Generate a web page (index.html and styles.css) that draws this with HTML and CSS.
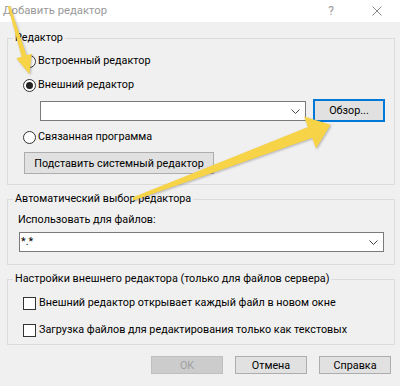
FILE: index.html
```html
<!DOCTYPE html>
<html lang="ru">
<head>
<meta charset="utf-8">
<title>Добавить редактор</title>
<link rel="stylesheet" href="styles.css">
</head>
<body>
<div class="window">
  <div class="titlebar">
    <span class="title">Добавить редактор</span>
    <div class="caption-btns">
      <span class="cap help">?</span>
      <span class="cap close">
        <svg width="10" height="10" viewBox="0 0 10 10"><path d="M0.5 0.5 L9.5 9.5 M9.5 0.5 L0.5 9.5" stroke="#8a8a8a" stroke-width="1" fill="none"/></svg>
      </span>
    </div>
  </div>

  <div class="content">
    <fieldset class="group g1">
      <legend>Редактор</legend>
      <div class="g1-body">
        <div class="opt-row"><span class="radio"></span><span>Встроенный редактор</span></div>
        <div class="opt-row r2"><span class="radio checked"></span><span>Внешний редактор</span></div>
        <div class="path-row">
          <div class="combo combo-path">
            <svg class="chev" width="9" height="5" viewBox="0 0 9 5"><path d="M0.5 0.5 L4.5 4.5 L8.5 0.5" stroke="#444" stroke-width="1" fill="none"/></svg>
          </div>
          <div class="btn btn-browse">Обзор...</div>
        </div>
        <div class="opt-row r3"><span class="radio"></span><span>Связанная программа</span></div>
        <div class="btn btn-sys">Подставить системный редактор</div>
      </div>
    </fieldset>

    <fieldset class="group g2">
      <legend>Автоматический выбор редактора</legend>
      <div class="g2-body">
        <div class="field-label">Использовать для файлов:</div>
        <div class="combo combo-mask">
          <span class="combo-text">*.*</span>
          <svg class="chev" width="9" height="5" viewBox="0 0 9 5"><path d="M0.5 0.5 L4.5 4.5 L8.5 0.5" stroke="#444" stroke-width="1" fill="none"/></svg>
        </div>
      </div>
    </fieldset>

    <fieldset class="group g3">
      <legend>Настройки внешнего редактора (только для файлов сервера)</legend>
      <div class="g3-body">
        <div class="opt-row"><span class="check"></span><span>Внешний редактор открывает каждый файл в новом окне</span></div>
        <div class="opt-row c2"><span class="check"></span><span>Загрузка файлов для редактирования только как текстовых</span></div>
      </div>
    </fieldset>

    <div class="footer">
      <div class="btn btn-foot disabled">OK</div>
      <div class="btn btn-foot">Отмена</div>
      <div class="btn btn-foot">Справка</div>
    </div>
  </div>

  <svg class="arrows" width="400" height="386" viewBox="0 0 400 386">
    <path d="M7.9 6.3 L10.1 5.7 L26.4 55.3 L31.7 53.7 L29.5 74.2 L16.3 58.3 L21.6 56.7 Z" fill="#f7d348"/>
    <path d="M132.5 197.6 L307.9 126.9 L304 116.6 L330.6 124.8 L316 148.4 L312.1 138.1 L133.5 200.4 Z" fill="#f7d348"/>
  </svg>
</div>
</body>
</html>
```

FILE: styles.css
```css
* {
  box-sizing: border-box;
}

html,
body {
  margin: 0;
  padding: 0;
}

body {
  width: 400px;
  height: 386px;
  overflow: hidden;
  background: #f0f0f0;
  font-family: Roboto, "Noto Sans", sans-serif;
  font-size: 10.8px;
  color: #000;
}

.window {
  position: relative;
  width: 400px;
  height: 386px;
}

/* title bar */
.titlebar {
  height: 22px;
  background: #fff;
  display: flex;
  align-items: center;
  justify-content: space-between;
  padding-left: 3px;
}

.title {
  color: #999;
  font-size: 11.3px;
  line-height: 16px;
}

.caption-btns {
  display: flex;
  align-items: center;
  height: 22px;
}

.cap {
  width: 46px;
  height: 22px;
  display: flex;
  align-items: center;
  justify-content: center;
}

.help {
  color: #999;
  font-size: 12px;
}

/* content */
.content {
  padding: 0 5px 0 7px;
}

.group {
  margin: 0;
  padding: 0;
  min-width: 0;
  border: 1px solid #dcdcdc;
}

.group legend {
  margin-left: 5px;
  padding: 0 2px;
  line-height: 16px;
}

.g1 {
  margin-top: 8px;
}

.g2 {
  margin-top: 6px;
}

.g3 {
  margin-top: 6px;
}

.g1-body {
  display: flex;
  flex-direction: column;
  align-items: flex-start;
  padding: 7px 0 10px 15px;
}

.opt-row {
  display: flex;
  align-items: center;
  height: 16px;
  line-height: 16px;
  white-space: nowrap;
}

.opt-row.r2 {
  margin-top: 8px;
}

.opt-row.r3 {
  margin-top: 7px;
}

.radio {
  width: 13px;
  height: 13px;
  border: 1px solid #333;
  border-radius: 50%;
  background: #fff;
  margin-right: 2px;
  display: flex;
  align-items: center;
  justify-content: center;
  flex: none;
}

.radio.checked::after {
  content: "";
  width: 7px;
  height: 7px;
  border-radius: 50%;
  background: #222;
}

.check {
  width: 13px;
  height: 13px;
  border: 1px solid #333;
  background: #fff;
  margin-right: 3px;
  flex: none;
}

.path-row {
  display: flex;
  align-items: center;
  gap: 7px;
  margin-top: 6px;
  margin-left: 17px;
}

.combo {
  position: relative;
  height: 20px;
  background: #fff;
  border: 1px solid #7a7a7a;
  display: flex;
  align-items: center;
}

.combo .chev {
  position: absolute;
  right: 5px;
  top: 7px;
}

.combo-path {
  width: 266px;
}

.combo-mask {
  width: 365px;
  margin-top: 4px;
  margin-left: 1px;
}

.combo-text {
  padding-left: 1px;
  line-height: 16px;
}

.btn {
  display: flex;
  align-items: center;
  justify-content: center;
  background: #e1e1e1;
  border: 1px solid #adadad;
  white-space: nowrap;
}

.btn-browse {
  width: 72px;
  height: 23px;
  border: 2px solid #0078d7;
}

.btn-sys {
  width: 190px;
  height: 22px;
  margin-top: 7px;
  margin-left: 1px;
}

.g2-body {
  display: flex;
  flex-direction: column;
  align-items: flex-start;
  padding: 5px 0 12px 10px;
}

.field-label {
  line-height: 16px;
}

.g3-body {
  display: flex;
  flex-direction: column;
  align-items: flex-start;
  padding: 8px 0 6px 15px;
}

.opt-row.c2 {
  margin-top: 11px;
}

.footer {
  display: flex;
  justify-content: flex-end;
  gap: 12px;
  margin-top: 11px;
  margin-right: 4px;
}

.btn-foot {
  width: 72px;
  height: 18px;
}

.btn-foot.disabled {
  background: #cccccc;
  border-color: #bfbfbf;
  color: #a0a0a0;
}

/* annotation arrows drawn over the dialog */
.arrows {
  position: absolute;
  top: 0;
  left: 0;
  pointer-events: none;
  filter: drop-shadow(1px 1px 1px rgba(0, 0, 0, 0.25));
}
```
